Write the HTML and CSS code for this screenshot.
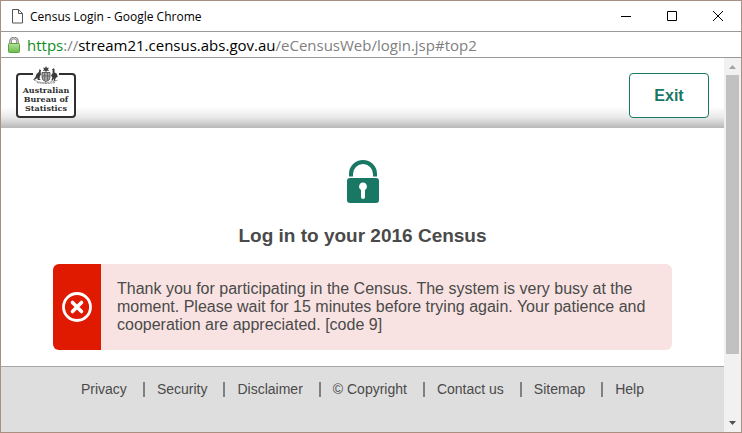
FILE: index.html
```
<!DOCTYPE html>
<html lang="en">
<head>
  <meta charset="UTF-8" />
  <meta name="viewport" content="width=device-width, initial-scale=1.0" />
  <title>Census Login</title>
  <link rel="stylesheet" href="styles.css">
</head>
<body>
  <div class="window">
    <div class="title-bar">
      <svg class="page-icon" width="11" height="15" viewBox="0 0 11 15" fill="none" stroke="#555">
        <path d="M.5.5h6l4 4v9.500h-10zM6.500.5v4h4" />
      </svg>
      <span class="window-title">Census Login - Google Chrome</span>
      <button class="window-btn" aria-label="Minimize">
        <svg width="10" height="10" viewBox="0 0 10 10" stroke="#000"><path d="M0 5.500h10" /></svg>
      </button>
      <button class="window-btn" aria-label="Maximize">
        <svg width="10" height="10" viewBox="0 0 10 10" fill="none" stroke="#000"><path d="M.5.5h9v9h-9z" /></svg>
      </button>
      <button class="window-btn" aria-label="Close">
        <svg width="10" height="10" viewBox="0 0 10 10" stroke="#000"><path d="M0 0l10 10M10 0L0 10" /></svg>
      </button>
    </div>

    <div class="address-bar">
      <svg width="12" height="16" viewBox="0 0 12 16">
        <defs>
          <linearGradient id="lock-fill" x1="0" y1="0" x2="0" y2="1">
            <stop offset="0" stop-color="#b5e29a" />
            <stop offset="1" stop-color="#6dbb4d" />
          </linearGradient>
        </defs>
        <path d="M2.500 8V4.500a3.500 3.500 0 0 1 7 0V8" fill="none" stroke="#808080" stroke-width="2.600" />
        <path d="M2.500 8V4.500a3.500 3.500 0 0 1 7 0V8" fill="none" stroke="#ddd" stroke-width=".9" />
        <rect x=".5" y="6.500" width="11" height="9" rx="1" fill="url(#lock-fill)" stroke="#58a33c" />
      </svg>
      <div class="url"><span class="scheme">https</span>://<span class="host">stream21.census.abs.gov.au</span>/eCensusWeb/login.jsp#top2</div>
    </div>

    <div class="viewport">
      <div class="page">
        <header class="header">
          <svg class="logo" width="60" height="53" viewBox="0 0 60 53" role="img" aria-label="Australian Bureau of Statistics">
            <rect x="1" y="8" width="58" height="43" rx="3" fill="#fff" stroke="#303030" stroke-width="2" />
            <path d="M17 4h26v13H17z" fill="#fff" />
            <!-- star and shield -->
            <path d="M30 0l1 2 2-.4-1 1.700 1 1.700-2-.3-1 1.500-1-1.500-2 .3 1-1.700-1-1.700 2 .4z" fill="#444" />
            <path d="M26 6.500h8v5q0 3-4 4-4-1-4-4z" fill="#aaa" stroke="#444" stroke-width=".8" />
            <path d="M26 10h8M28.700 7v7M31.500 7v7" stroke="#555" stroke-width=".7" />
            <!-- kangaroo -->
            <path d="M23.500 3l1.700 1.500-.6 1.300.4 3-1 1-.5 3 1.300 1.200h-3l-.5-2-2 1.500-2.300.5 2.500-3 1-3 2.300-2z" fill="#3c3c3c" />
            <!-- emu -->
            <path d="M36 3.200l1.500-1 1 .8.100 3.500 2 1 1.200 3-2 1.500-.8 2 .8 1h-2l.3-3-1.300 2.500h-1.500l1-3-1.300-2 1.700-2.500-.1-2.800z" fill="#3c3c3c" />
            <path d="M18 14q5 3 12 2.500T42 14M21 16.500q9 2 18 0" fill="none" stroke="#888" stroke-width="1" stroke-dasharray="2 .7" />
            <g class="logo-text" text-anchor="middle">
              <text x="30" y="27">Australian</text>
              <text x="30" y="36">Bureau of</text>
              <text x="30" y="45">Statistics</text>
            </g>
          </svg>
          <button class="exit-btn">Exit</button>
        </header>

        <main class="main">
          <svg class="lock" width="32" height="44" viewBox="0 0 32 44">
            <path d="M4 17.500V15a12 12 0 0 1 24 0V17.500" fill="none" stroke="#187863" stroke-width="4" />
            <rect y="19" width="32" height="25" rx="3" fill="#187863" />
            <path d="M16 23.500a4 4 0 0 0-2 7.400V38a2 2 0 0 0 4 0v-7.100a4 4 0 0 0-2-7.400z" fill="#fff" />
          </svg>
          <h1 class="heading">Log in to your 2016 Census</h1>
          <div class="alert" role="alert">
            <div class="alert-icon">
              <svg width="30" height="30" viewBox="0 0 30 30" fill="none" stroke="#fff">
                <circle cx="15" cy="15" r="13.500" stroke-width="2.800" />
                <path d="M10.500 10.500l9 9M19.500 10.500l-9 9" stroke-width="3.600" stroke-linecap="round" />
              </svg>
            </div>
            <p class="alert-text">Thank you for participating in the Census. The system is very busy at the moment. Please wait for 15 minutes before trying again. Your patience and cooperation are appreciated. [code 9]</p>
          </div>
        </main>

        <footer class="footer">
          <ul class="footer-links">
            <li><a href="#">Privacy</a></li>
            <li><a href="#">Security</a></li>
            <li><a href="#">Disclaimer</a></li>
            <li><a href="#">© Copyright</a></li>
            <li><a href="#">Contact us</a></li>
            <li><a href="#">Sitemap</a></li>
            <li><a href="#">Help</a></li>
          </ul>
        </footer>
      </div>

      <div class="scrollbar">
        <svg class="arrow" width="17" height="17" viewBox="0 0 17 17"><path d="M5 11l3.500-4 3.500 4z" fill="#a3a3a3" /></svg>
        <div class="track"><div class="thumb"></div></div>
        <svg class="arrow" width="17" height="17" viewBox="0 0 17 17"><path d="M5 6l3.500 4L12 6z" fill="#505050" /></svg>
      </div>
    </div>
  </div>
</body>
</html>
```
FILE: styles.css
```
* {
  box-sizing: border-box;
  margin: 0;
  padding: 0;
}

body {
  font-family: "Liberation Sans", Arial, sans-serif;
  color: #4a4a4a;
  background: #fff;
}

svg {
  display: block;
  flex-shrink: 0;
}

.window {
  display: flex;
  flex-direction: column;
  height: 100vh;
  border: 1px solid #a98f7f;
}

/* browser chrome */
.title-bar {
  display: flex;
  align-items: center;
  height: 31px;
  padding-left: 11px;
  border-bottom: 1px solid #999;
}

.window-title {
  flex: 1;
  padding-left: 7px;
  font: 12px "Open Sans", sans-serif;
  color: #000;
}

.window-btn {
  display: flex;
  align-items: center;
  justify-content: center;
  width: 46px;
  height: 28px;
  border: none;
  background: transparent;
}

.address-bar {
  display: flex;
  align-items: center;
  height: 26px;
  padding-left: 7px;
  gap: 7px;
  border-bottom: 1px solid #999;
}

.url {
  font: 15px "Open Sans", sans-serif;
  color: #808080;
  white-space: nowrap;
}

.scheme {
  color: #0b8f1c;
}

.host {
  color: #000;
}

.viewport {
  display: flex;
  flex: 1;
  min-height: 0;
}

.page {
  display: flex;
  flex-direction: column;
  flex: 1;
  overflow: hidden;
}

/* page */
.header {
  display: flex;
  justify-content: space-between;
  align-items: flex-start;
  padding: 8px 15px 9px;
  background: linear-gradient(#fff 70%, #e8e8e8 85%, #b8b8b8);
}

.logo-text {
  font: bold 8px "DejaVu Serif", serif;
  fill: #303030;
}

.exit-btn {
  width: 80px;
  height: 45px;
  margin-top: 7px;
  border: 1px solid #187863;
  border-radius: 4px;
  background: #fff;
  color: #187863;
  font: bold 16px "Liberation Sans", Arial, sans-serif;
  cursor: pointer;
}

.main {
  display: flex;
  flex-direction: column;
  align-items: center;
  padding: 31px 52px 16px;
}

.heading {
  margin: 22px 0 17px;
  font-size: 19px;
  line-height: 22px;
}

.alert {
  display: flex;
  width: 100%;
  border-radius: 6px;
  background: #f8e3e2;
  overflow: hidden;
}

.alert-icon {
  display: flex;
  align-items: center;
  justify-content: center;
  flex: 0 0 48px;
  background: #df1a00;
}

.alert-text {
  padding: 16px;
  font-size: 16px;
  line-height: 18px;
}

.footer {
  flex: 1;
  padding-top: 15px;
  border-top: 1px solid #a6a6a6;
  background: #dedede;
}

.footer-links {
  display: flex;
  justify-content: center;
  list-style: none;
  font-size: 14px;
  line-height: 15px;
}

.footer-links li + li {
  margin-left: 16px;
  padding-left: 12px;
  border-left: 2px solid #808080;
}

.footer-links a {
  color: #4a4a4a;
  text-decoration: none;
}

/* scrollbar */
.scrollbar {
  display: flex;
  flex-direction: column;
  width: 17px;
  background: #f1f1f1;
}

.track {
  flex: 1;
  padding: 0 2px;
}

.thumb {
  height: 82%;
  background: #c1c1c1;
}
```
